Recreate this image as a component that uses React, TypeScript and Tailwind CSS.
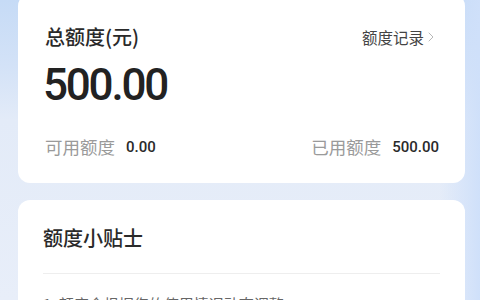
import { ChevronRight } from "lucide-react";

const cjk = "font-['Noto_Sans_CJK_SC',sans-serif]";
const num = "font-['Roboto','Noto_Sans_CJK_SC',sans-serif]";

function QuotaCard() {
  return (
    <section className="-mt-[6px] rounded-xl bg-white pl-[27px] pr-[26px] pt-[31px] pb-[26px]">
      <div className="flex items-center justify-between">
        <h2 className={`${cjk} text-[20px] leading-[24px] font-medium text-[#2a2a2a]`}>总额度(元)</h2>
        <a className={`${cjk} flex items-center text-[15.5px] leading-[20px] text-[#444]`}>
          额度记录
          <ChevronRight className="-ml-[1px] h-[16px] w-[16px] text-[#aaa]" strokeWidth={1.25} />
        </a>
      </div>
      <p className={`${num} -ml-[2px] mt-[8px] text-[44px] leading-[56px] font-medium tracking-[-2.2px] text-[#222]`}>
        500.00
      </p>
      <div className="mt-[24px] flex items-center justify-between">
        <div className="flex items-center gap-[11px]">
          <span className={`${cjk} text-[17.5px] leading-[20px] text-[#9a9a9a]`}>可用额度</span>
          <span className={`${num} text-[15px] leading-[20px] font-medium text-[#2a2a2a]`}>0.00</span>
        </div>
        <div className="flex items-center gap-[11px]">
          <span className={`${cjk} text-[17.5px] leading-[20px] text-[#9a9a9a]`}>已用额度</span>
          <span className={`${num} text-[15px] leading-[20px] font-medium text-[#2a2a2a]`}>500.00</span>
        </div>
      </div>
    </section>
  );
}

function TipsCard() {
  return (
    <section className="mt-[17px] rounded-xl bg-white px-[25px] pt-[25px]">
      <h2 className={`${cjk} text-[20px] leading-[26px] font-medium text-[#2a2a2a]`}>额度小贴士</h2>
      <div className="mt-[22px] border-t border-[#eeeeee]" />
      <p className={`${cjk} mt-[20px] text-[15px] leading-[20px] text-[#666]`}>
        1. 额度会根据您的使用情况动态调整
      </p>
    </section>
  );
}

export default function App() {
  return (
    <div className="relative h-[300px] w-[480px] overflow-hidden bg-[linear-gradient(180deg,#c6dbf6_0%,#d3e2f7_22%,#e3ebf8_40%,#e8eef9_100%)]">
      <div className="pointer-events-none absolute right-0 top-0 h-full w-[40px] bg-[linear-gradient(90deg,rgba(205,222,250,0)_0%,#cfe0fa_100%)]" />
      <div className="relative ml-[18px] mr-[15px]">
        <QuotaCard />
        <TipsCard />
      </div>
    </div>
  );
}
